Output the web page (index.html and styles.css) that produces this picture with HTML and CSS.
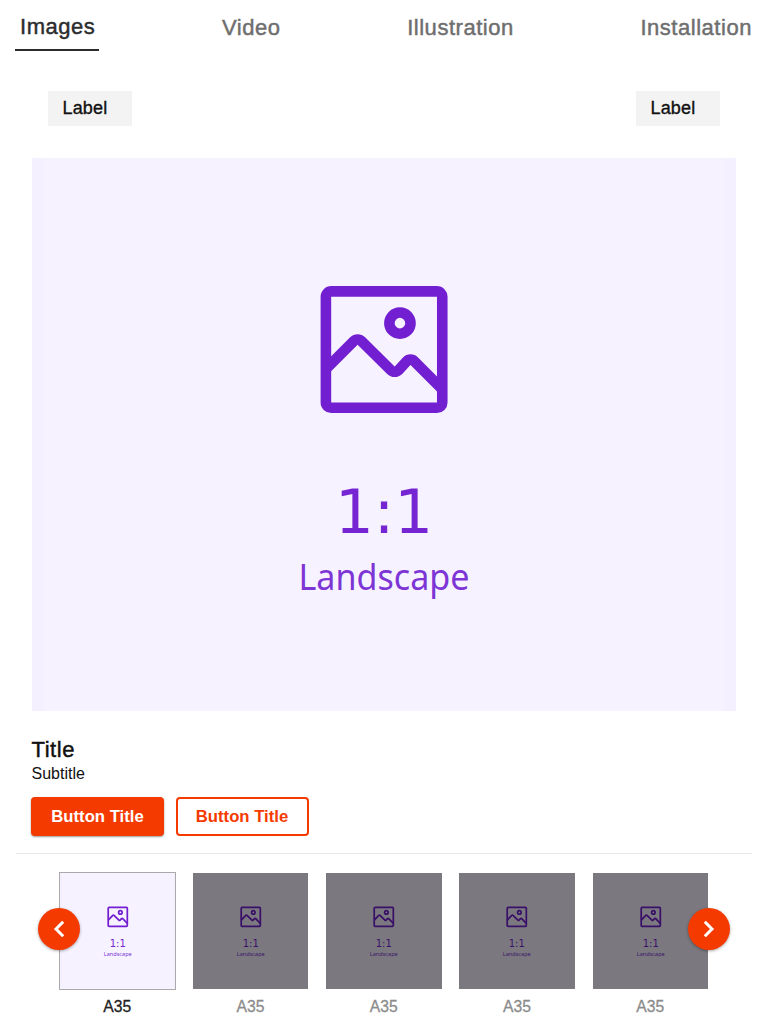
FILE: index.html
```html
<!DOCTYPE html>
<html lang="en">
<head>
<meta charset="utf-8">
<title>Gallery</title>
<link rel="stylesheet" href="styles.css">
</head>
<body>
<nav class="tabs">
  <a class="tab tab-active">Images</a>
  <a class="tab">Video</a>
  <a class="tab">Illustration</a>
  <a class="tab">Installation</a>
</nav>
<main class="content">
  <div class="labels"><span class="label">Label</span><span class="label">Label</span></div>
  <svg class="hero" viewBox="0 0 704 704" preserveAspectRatio="xMidYMid slice">
    <g id="placeholder">
      <rect class="ph-edge" width="704" height="704"/>
      <rect class="ph-bg" x="12" width="680" height="704"/>
      <g class="ph-icon" transform="translate(288.6 203.6) scale(5.29)">
        <rect x="1" y="1" width="22" height="22" rx="1"/>
        <circle cx="15" cy="7" r="2"/>
        <path d="M1 15.68 6.29 10.39A1 1 0 0 1 7.71 10.39L13.29 15.91A1 1 0 0 0 14.71 15.91L16.29 14.19A1 1 0 0 1 17.71 14.19L23 19.48"/>
      </g>
      <text class="ph-ratio" x="352" y="450" text-anchor="middle">1:1</text>
      <text class="ph-name" x="352" y="507" text-anchor="middle" textLength="171" lengthAdjust="spacingAndGlyphs">Landscape</text>
    </g>
  </svg>
  <h1 class="title">Title</h1>
  <p class="subtitle">Subtitle</p>
  <div class="actions">
    <button class="btn btn-primary">Button Title</button>
    <button class="btn btn-outline">Button Title</button>
  </div>
</main>
<section class="carousel">
  <div class="slides">
    <figure class="slide slide-active"><div class="thumb"><svg viewBox="0 0 704 704"><use href="#placeholder"/></svg></div><figcaption>A35</figcaption></figure>
    <figure class="slide"><div class="thumb"><svg viewBox="0 0 704 704"><use href="#placeholder"/></svg></div><figcaption>A35</figcaption></figure>
    <figure class="slide"><div class="thumb"><svg viewBox="0 0 704 704"><use href="#placeholder"/></svg></div><figcaption>A35</figcaption></figure>
    <figure class="slide"><div class="thumb"><svg viewBox="0 0 704 704"><use href="#placeholder"/></svg></div><figcaption>A35</figcaption></figure>
    <figure class="slide"><div class="thumb"><svg viewBox="0 0 704 704"><use href="#placeholder"/></svg></div><figcaption>A35</figcaption></figure>
  </div>
  <button class="arrow arrow-prev" aria-label="Previous"><svg viewBox="0 0 42 42"><path d="M25.2 13.7 18 21l7.2 7.3"/></svg></button>
  <button class="arrow arrow-next" aria-label="Next"><svg viewBox="0 0 42 42"><path d="M16.8 13.7 24 21l-7.2 7.3"/></svg></button>
</section>
</body>
</html>
```
FILE: styles.css
```css
* { box-sizing: border-box; }
body {
  margin: 0;
  background: #fff;
  color: #111;
  font-family: "Liberation Sans", Arial, sans-serif;
}

.ph-edge { fill: #f4f0ff; }
.ph-bg { fill: #f7f2ff; }
.ph-icon { fill: none; stroke: #721fd1; stroke-width: 2; }
.ph-ratio { fill: #7625d2; font: 61px "DejaVu Sans", sans-serif; }
.ph-name { fill: #7d35d5; font: 35.500px "Noto Sans", sans-serif; }

.tabs {
  display: flex;
  justify-content: space-between;
  height: 51px;
  padding: 0 16px 0 15px;
}
.tab {
  padding-top: 15px;
  font-size: 22px;
  line-height: 26px;
  letter-spacing: .53px;
  color: #6e6e6e;
  -webkit-text-stroke: .45px;
}
.tab-active {
  margin-right: -4px;
  padding: 14px 4px 0 5px;
  color: #2c2c2e;
  border-bottom: 2px solid #2c2c2e;
}

.content { padding: 40px 32px 0; }
.labels {
  display: flex;
  justify-content: space-between;
  padding: 0 16px;
}
.label {
  width: 84px;
  height: 35px;
  padding-left: 14.500px;
  background: #f3f3f3;
  font-size: 18px;
  line-height: 35px;
  letter-spacing: .15px;
  -webkit-text-stroke: .35px;
}
.hero {
  display: block;
  width: 704px;
  height: 553px;
  margin-top: 32px;
}
.title {
  margin: 25px 0 0 -.5px;
  font-size: 22px;
  font-weight: 400;
  line-height: 28px;
  letter-spacing: .55px;
  -webkit-text-stroke: .45px;
}
.subtitle {
  margin: 0 0 0 -.5px;
  font-size: 16px;
  line-height: 20px;
}
.actions {
  display: flex;
  gap: 11.500px;
  margin: 13px 0 0 -1px;
}
.btn {
  width: 133px;
  height: 39px;
  padding: 0;
  border: 2px solid #f53a00;
  border-radius: 4px;
  font: bold 16.700px "Liberation Sans", Arial, sans-serif;
}
.btn-primary {
  background: #f53a00;
  color: #fff;
  box-shadow: 0 1px 2px rgba(0, 0, 0, .4);
}
.btn-outline { background: #fff; color: #f53a00; }

.carousel {
  position: relative;
  margin: 17px 16px 0;
  padding: 19px 43.500px 0;
  border-top: 1px solid #e8e8e8;
}
.slides {
  display: grid;
  grid-template-columns: repeat(5, 115.500px);
  gap: 17.750px;
}
.slide { margin: 0; text-align: center; }
.thumb { position: relative; height: 115.500px; }
.thumb svg { display: block; width: 100%; height: 100%; }
.thumb::after {
  content: "";
  position: absolute;
  inset: 0;
  background: rgba(0, 0, 0, .5);
}
.slide-active .thumb { outline: 1px solid #aaa; }
.slide-active .thumb::after { display: none; }
.slide figcaption {
  margin-top: 8px;
  color: #8c8c8c;
  font-size: 15.700px;
  line-height: 20px;
  -webkit-text-stroke: .3px;
}
.slide-active figcaption { color: #222; }

.arrow {
  position: absolute;
  top: 54px;
  width: 42px;
  height: 42px;
  padding: 0;
  border: 0;
  border-radius: 50%;
  background: #f53a00;
  box-shadow: 0 1px 3px rgba(0, 0, 0, .35);
}
.arrow svg { display: block; }
.arrow path { fill: none; stroke: #fff; stroke-width: 3; }
.arrow-prev { left: 22px; }
.arrow-next { right: 22px; }
```
